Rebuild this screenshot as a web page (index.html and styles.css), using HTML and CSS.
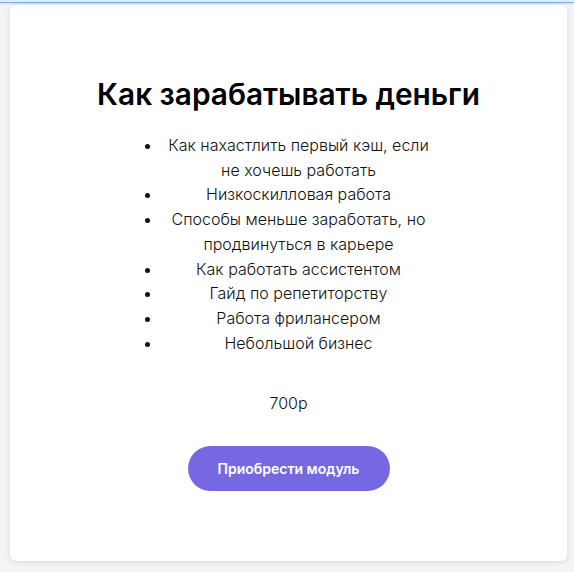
FILE: index.html
```html
<!DOCTYPE html>
<html lang="ru">
<head>
<meta charset="utf-8">
<link rel="stylesheet" href="styles.css">
</head>
<body>
<div class="topline"></div>
<div class="card">
  <h1 class="title">Как зарабатывать деньги</h1>
  <ul class="topics">
    <li>Как нахастлить первый кэш, если не хочешь работать</li>
    <li>Низкоскилловая работа</li>
    <li>Способы меньше заработать, но продвинуться в карьере</li>
    <li>Как работать ассистентом</li>
    <li>Гайд по репетиторству</li>
    <li>Работа фрилансером</li>
    <li>Небольшой бизнес</li>
  </ul>
  <p class="price">700р</p>
  <button class="buy">Приобрести модуль</button>
</div>
</body>
</html>
```
FILE: styles.css
```css
html, body {
  margin: 0;
  padding: 0;
}
body {
  background: #f5f5f7;
  font-family: Inter, "Noto Sans", sans-serif;
  color: #1a1a1a;
  height: 572px;
  overflow: hidden;
}
.topline {
  height: 2px;
  background: #e6ecf6;
  border-bottom: 1px solid #86addf;
  box-shadow: 0 1px 2px rgba(120, 140, 230, 0.25);
}
.card {
  margin: 2px 7px 0 10px;
  height: 556px;
  background: #fff;
  border-radius: 6px;
  box-shadow: 0 1px 6px rgba(0, 0, 0, 0.12);
  display: flex;
  flex-direction: column;
  align-items: center;
  box-sizing: border-box;
  padding-top: 71px;
}
.title {
  margin: 0;
  font-size: 29.8px;
  font-weight: 600;
  line-height: 36px;
  color: #000;
}
.topics {
  margin: 21px 0 0 0;
  padding: 0 0 0 20px;
  width: 273px;
  text-align: center;
  font-size: 16px;
  line-height: 24.7px;
  font-weight: 300;
  color: #111;
}
.price {
  margin: 36px 0 0;
  font-size: 16px;
  line-height: 24px;
  font-weight: 300;
  color: #111;
}
.buy {
  margin-top: 31px;
  width: 202px;
  height: 45px;
  border: none;
  border-radius: 23px;
  background: #7668e2;
  color: #fff;
  font-family: Inter, "Noto Sans", sans-serif;
  font-size: 14px;
  font-weight: 600;
}
```
